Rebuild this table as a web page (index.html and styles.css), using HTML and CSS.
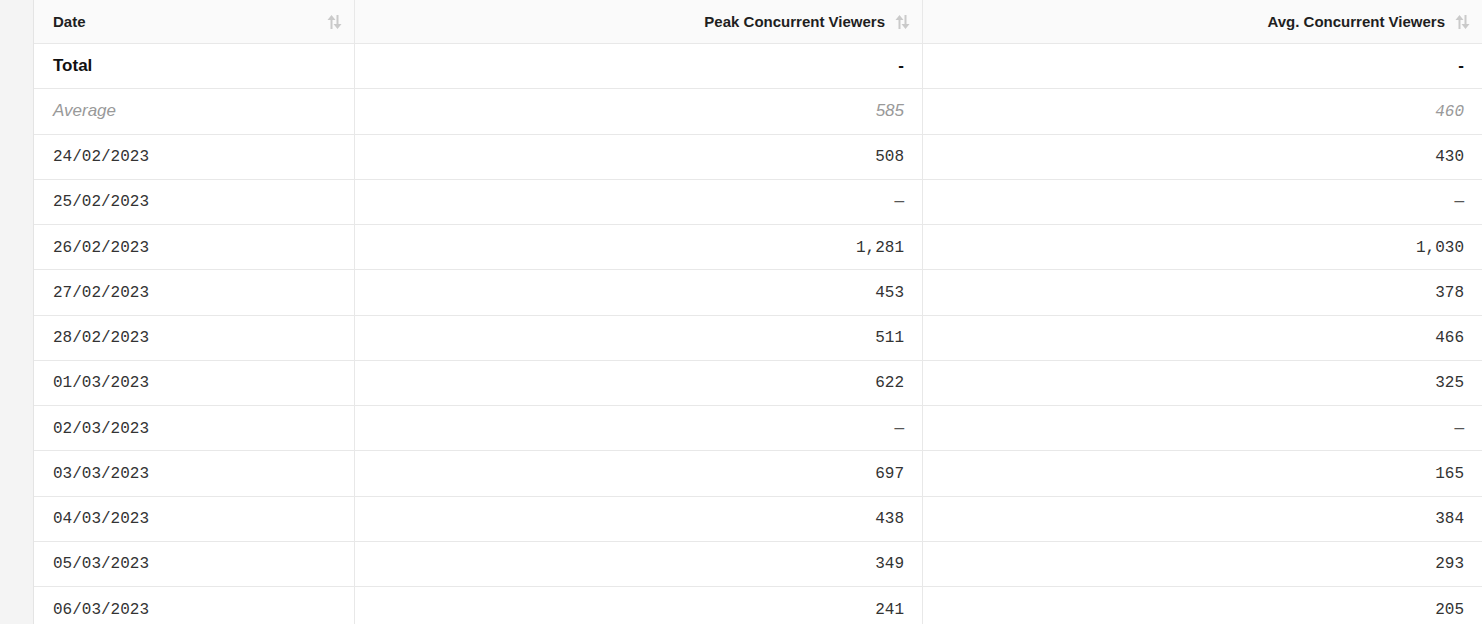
FILE: index.html
```html
<!DOCTYPE html>
<html>
<head>
<meta charset="utf-8">
<link rel="stylesheet" href="styles.css">
</head>
<body>
<div class="page">
  <div class="table">
    <div class="cell head"><span>Date</span><svg class="sort" viewBox="0 0 15 16" width="15" height="16"><path d="M4.5 15V5M10.5 1v10" stroke="#cacaca" stroke-width="2"/><path d="M0.5 6L4.5 1 8.5 6Z M6.5 10L10.5 15 14.5 10Z" fill="#cacaca"/></svg></div>
    <div class="cell head right"><span>Peak Concurrent Viewers</span><svg class="sort" viewBox="0 0 15 16" width="15" height="16"><path d="M4.5 15V5M10.5 1v10" stroke="#cacaca" stroke-width="2"/><path d="M0.5 6L4.5 1 8.5 6Z M6.5 10L10.5 15 14.5 10Z" fill="#cacaca"/></svg></div>
    <div class="cell head right last"><span>Avg. Concurrent Viewers</span><svg class="sort" viewBox="0 0 15 16" width="15" height="16"><path d="M4.5 15V5M10.5 1v10" stroke="#cacaca" stroke-width="2"/><path d="M0.5 6L4.5 1 8.5 6Z M6.5 10L10.5 15 14.5 10Z" fill="#cacaca"/></svg></div>

    <div class="cell total">Total</div>
    <div class="cell total num">-</div>
    <div class="cell total num last">-</div>

    <div class="cell avg">Average</div>
    <div class="cell avg num">585</div>
    <div class="cell avg num mono last">460</div>

    <div class="cell mono">24/02/2023</div><div class="cell mono num">508</div><div class="cell mono num last">430</div>
    <div class="cell mono">25/02/2023</div><div class="cell mono num dash">—</div><div class="cell mono num dash last">—</div>
    <div class="cell mono">26/02/2023</div><div class="cell mono num">1,281</div><div class="cell mono num last">1,030</div>
    <div class="cell mono">27/02/2023</div><div class="cell mono num">453</div><div class="cell mono num last">378</div>
    <div class="cell mono">28/02/2023</div><div class="cell mono num">511</div><div class="cell mono num last">466</div>
    <div class="cell mono">01/03/2023</div><div class="cell mono num">622</div><div class="cell mono num last">325</div>
    <div class="cell mono">02/03/2023</div><div class="cell mono num dash">—</div><div class="cell mono num dash last">—</div>
    <div class="cell mono">03/03/2023</div><div class="cell mono num">697</div><div class="cell mono num last">165</div>
    <div class="cell mono">04/03/2023</div><div class="cell mono num">438</div><div class="cell mono num last">384</div>
    <div class="cell mono">05/03/2023</div><div class="cell mono num">349</div><div class="cell mono num last">293</div>
    <div class="cell mono">06/03/2023</div><div class="cell mono num">241</div><div class="cell mono num last">205</div>
  </div>
</div>
</body>
</html>
```
FILE: styles.css
```css
html, body {
  margin: 0;
  padding: 0;
  background: #f4f4f4;
  overflow: hidden;
}
.page {
  margin-left: 33px;
  height: 624px;
  background: #fff;
  border-left: 1px solid #e4e4e4;
  font-family: "Liberation Sans", Arial, sans-serif;
  color: #222;
}
.table {
  display: grid;
  grid-template-columns: 321px 568px 1fr;
  grid-template-rows: 44px;
  grid-auto-rows: 45.25px;
}
.cell {
  display: flex;
  align-items: center;
  box-sizing: border-box;
  border-right: 1px solid #e8e8e8;
  border-bottom: 1px solid #e8e8e8;
  padding: 0 18px 0 19px;
  font-size: 16px;
  color: #333;
  white-space: nowrap;
}
.cell.last {
  border-right: none;
}
.head {
  background: #fafafa;
  font-size: 15px;
  font-weight: bold;
  color: #1f1f1f;
  justify-content: space-between;
  padding-right: 12px;
}
.head.right {
  justify-content: flex-end;
  gap: 10px;
}
.sort {
  flex: none;
}
.num {
  justify-content: flex-end;
}
.total {
  font-size: 17px;
  font-weight: bold;
  color: #111;
}
.avg {
  font-size: 17px;
  font-style: italic;
  color: #999;
}
.mono {
  font-family: "Liberation Mono", "Courier New", monospace;
  font-size: 16px;
  color: #333;
  padding-top: 1px;
}
.avg.mono {
  color: #999;
}
.dash {
  color: #555;
}
```
